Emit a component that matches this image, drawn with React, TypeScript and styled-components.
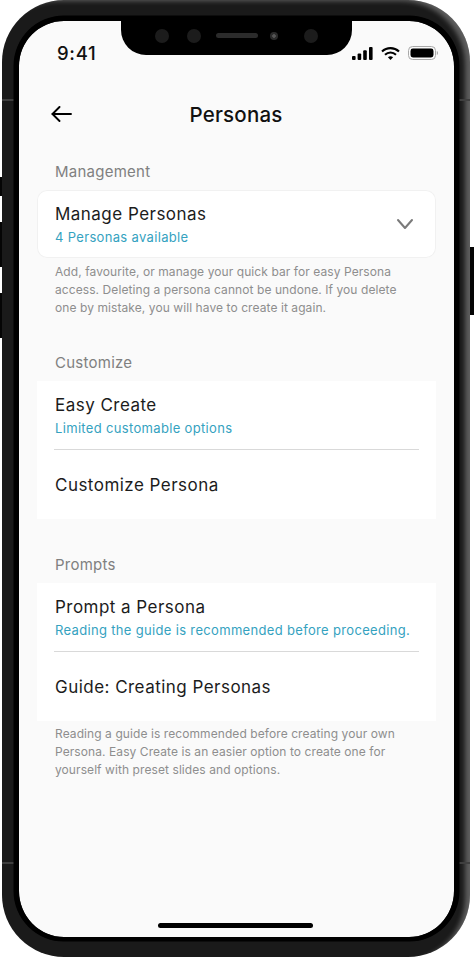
import styled, { createGlobalStyle } from "styled-components"

const GlobalStyle = createGlobalStyle`
    html, body {
        margin: 0;
        padding: 0;
        background: #ffffff;
        font-family: "Inter", "Liberation Sans", sans-serif;
    }
`

const sideButtons = [
    { top: 177, height: 19 },
    { top: 222, height: 45 },
    { top: 293, height: 45 },
]

const antennas = [99, 862]

const App = () => {
    return (
        <>
            <GlobalStyle />
            <Stage>
                {sideButtons.map((b) => (
                    <LeftButton key={b.top} $top={b.top} $height={b.height} />
                ))}
                <RightButton />

                <Phone>
                    {antennas.map((y) => (
                        <Antenna key={`l${y}`} $top={y} $side="left" />
                    ))}
                    {antennas.map((y) => (
                        <Antenna key={`r${y}`} $top={y} $side="right" />
                    ))}

                    <Screen>
                        <Notch>
                            <Lens />
                            <Lens />
                            <Speaker />
                            <Camera />
                            <Lens />
                        </Notch>

                        <StatusBar>
                            <Time>9:41</Time>
                            <StatusIcons>
                                <svg width="21" height="13" viewBox="0 0 21 13" fill="#000">
                                    <rect x="0" y="9" width="3.6" height="4" rx="1" />
                                    <rect x="5.6" y="6.4" width="3.6" height="6.6" rx="1" />
                                    <rect x="11.2" y="3.2" width="3.6" height="9.8" rx="1" />
                                    <rect x="17" y="0" width="3.6" height="13" rx="1" />
                                </svg>
                                <svg width="19" height="13" viewBox="0 0 19 13" fill="none" stroke="#000" strokeWidth="2.1">
                                    <path d="M1 4.6C5.8 0 13.2 0 18 4.6" />
                                    <path d="M4 7.7C7.2 4.7 11.8 4.7 15 7.7" />
                                    <path d="M6.9 10.3L9.5 13L12.1 10.3C10.6 8.9 8.4 8.9 6.9 10.3Z" fill="#000" stroke="none" />
                                </svg>
                                <svg width="30" height="14" viewBox="0 0 30 14" fill="none">
                                    <rect x="0.5" y="0.5" width="27" height="13" rx="4" stroke="#a9a9a9" />
                                    <rect x="2.5" y="2.5" width="23" height="9" rx="2.4" fill="#000" />
                                    <path d="M28.8 5V9C29.6 8.7 30 8 30 7C30 6 29.6 5.3 28.8 5Z" fill="#a9a9a9" />
                                </svg>
                            </StatusIcons>
                        </StatusBar>

                        <Header>
                            <BackButton>
                                <svg width="21" height="16" viewBox="0 0 21 16" fill="none" stroke="#000" strokeWidth="1.9" strokeLinecap="round" strokeLinejoin="round">
                                    <path d="M20 8H1.5" />
                                    <path d="M8.5 1L1.5 8L8.5 15" />
                                </svg>
                            </BackButton>
                            <Title>Personas</Title>
                        </Header>

                        <SectionLabel $first>Management</SectionLabel>
                        <Card $outlined>
                            <Row>
                                <div>
                                    <RowTitle>Manage Personas</RowTitle>
                                    <RowSub>4 Personas available</RowSub>
                                </div>
                                <svg width="18" height="12" viewBox="0 0 18 12" fill="none" stroke="#7a7a7a" strokeWidth="2" strokeLinecap="round" strokeLinejoin="round">
                                    <path d="M2 2L9 10L16 2" />
                                </svg>
                            </Row>
                        </Card>
                        <Note>
                            Add, favourite, or manage your quick bar for easy Persona<br />
                            access. Deleting a persona cannot be undone. If you delete<br />
                            one by mistake, you will have to create it again.
                        </Note>

                        <SectionLabel>Customize</SectionLabel>
                        <Card>
                            <Row>
                                <div>
                                    <RowTitle>Easy Create</RowTitle>
                                    <RowSub>Limited customable options</RowSub>
                                </div>
                            </Row>
                            <Divider />
                            <PlainRow>
                                <RowTitle>Customize Persona</RowTitle>
                            </PlainRow>
                        </Card>

                        <SectionLabel>Prompts</SectionLabel>
                        <Card>
                            <Row>
                                <div>
                                    <RowTitle>Prompt a Persona</RowTitle>
                                    <RowSub>Reading the guide is recommended before proceeding.</RowSub>
                                </div>
                            </Row>
                            <Divider />
                            <PlainRow>
                                <RowTitle>Guide: Creating Personas</RowTitle>
                            </PlainRow>
                        </Card>
                        <Note $tight>
                            Reading a guide is recommended before creating your own<br />
                            Persona. Easy Create is an easier option to create one for<br />
                            yourself with preset slides and options.
                        </Note>

                        <HomeIndicator />
                    </Screen>
                </Phone>
            </Stage>
        </>
    )
}

export default App

const Stage = styled.div`
    position: relative;
    width: 474px;
    height: 957px;
    overflow: hidden;
    padding-left: 2px;
    box-sizing: border-box;
`

const LeftButton = styled.div<{ $top: number; $height: number }>`
    position: absolute;
    left: 0;
    top: ${(p) => p.$top}px;
    width: 3px;
    height: ${(p) => p.$height}px;
    background: #050505;
`

const RightButton = styled.div`
    position: absolute;
    left: 470px;
    top: 247px;
    width: 4px;
    height: 68px;
    background: #050505;
`

const Phone = styled.div`
    position: relative;
    width: 468px;
    height: 957px;
    box-sizing: border-box;
    padding: 16px 11px 16px 12px;
    background: #1a1a1a;
    border-radius: 62px;
    box-shadow: inset -7px 3px 5px -2px rgba(255, 255, 255, 0.3);
`

const Antenna = styled.div<{ $top: number; $side: "left" | "right" }>`
    position: absolute;
    top: ${(p) => p.$top}px;
    ${(p) => (p.$side === "left" ? "left: 0; width: 12px;" : "right: 0; width: 11px;")}
    height: 2px;
    background: #3f3f3f;
`

const Screen = styled.div`
    position: relative;
    height: 100%;
    box-sizing: border-box;
    display: flex;
    flex-direction: column;
    border: 5px solid #000;
    border-bottom-width: 4px;
    border-radius: 50px;
    background: #fafafa;
    background-clip: padding-box;
    box-shadow: 0 0 0 0.5px #000;
`

const Notch = styled.div`
    position: absolute;
    top: -1px;
    left: 102px;
    width: 231px;
    height: 35px;
    box-sizing: border-box;
    padding: 0 34px 4px 34px;
    display: flex;
    align-items: center;
    background: #000;
    border-radius: 0 0 25px 25px;
`

const Lens = styled.div`
    flex: none;
    width: 14px;
    height: 14px;
    border-radius: 50%;
    background: #1c1c1c;
    margin-right: 18px;

    &:last-child {
        margin-right: 0;
    }
`

const Speaker = styled.div`
    flex: none;
    width: 42px;
    height: 5px;
    border-radius: 3px;
    background: #2b2b2b;
    margin-left: -3px;
    margin-right: 12px;
`

const Camera = styled.div`
    flex: none;
    width: 8px;
    height: 8px;
    border-radius: 50%;
    background: radial-gradient(circle, #555 0 1.5px, #2a2a2a 2px);
    margin-right: 26px;
`

const StatusBar = styled.div`
    height: 64px;
    flex: none;
    display: flex;
    align-items: center;
    justify-content: space-between;
    padding: 0 16px 0 38px;
`

const Time = styled.span`
    font-size: 18.5px;
    font-weight: 500;
    line-height: 22px;
    color: #111;
    letter-spacing: 0.7px;
`

const StatusIcons = styled.div`
    display: flex;
    align-items: center;
    gap: 8px;
`

const Header = styled.div`
    height: 58px;
    flex: none;
    display: grid;
    grid-template-columns: 1fr auto 1fr;
    align-items: center;
    padding: 0 33px 0 32px;
`

const BackButton = styled.div`
    display: flex;
    align-items: center;
`

const Title = styled.div`
    font-size: 20.5px;
    font-weight: 500;
    color: #111;
    letter-spacing: 0.2px;
`

const SectionLabel = styled.div<{ $first?: boolean }>`
    flex: none;
    height: 20px;
    line-height: 21px;
    margin: ${(p) => (p.$first ? "18px" : "35px")} 18px 9px;
    padding-left: 18px;
    font-size: 15px;
    color: #808080;
    letter-spacing: 0.25px;
`

const Card = styled.div<{ $outlined?: boolean }>`
    flex: none;
    margin: 0 18px;
    background: #fff;
    border-radius: ${(p) => (p.$outlined ? "10px" : "0")};
    ${(p) => p.$outlined && "box-shadow: inset 0 0 0 1px #f1f1f1;"}
`

const Row = styled.div`
    box-sizing: border-box;
    height: 68px;
    padding: 13px 22px 0 18px;
    display: flex;
    align-items: flex-start;
    justify-content: space-between;

    & > svg {
        margin-top: 15px;
    }
`

const PlainRow = styled.div`
    box-sizing: border-box;
    height: 69px;
    padding: 2px 18px 0;
    display: flex;
    align-items: center;
`

const RowTitle = styled.div`
    font-size: 17px;
    line-height: 23px;
    color: #1c1c1c;
    letter-spacing: 0.47px;
`

const RowSub = styled.div`
    margin-top: 2px;
    font-size: 13px;
    line-height: 18px;
    color: #35a2bf;
    letter-spacing: 0.33px;
`

const Divider = styled.div`
    height: 1px;
    margin: 0 17px;
    background: #d9d9d9;
`

const Note = styled.p<{ $tight?: boolean }>`
    flex: none;
    margin: ${(p) => (p.$tight ? "4px" : "5px")} 36px 0;
    font-size: 12px;
    line-height: 18px;
    color: #8e8e8e;
    letter-spacing: 0.08px;
    white-space: nowrap;
`

const HomeIndicator = styled.div`
    position: absolute;
    left: 139px;
    bottom: 9px;
    width: 155px;
    height: 5px;
    border-radius: 3px;
    background: #000;
`
